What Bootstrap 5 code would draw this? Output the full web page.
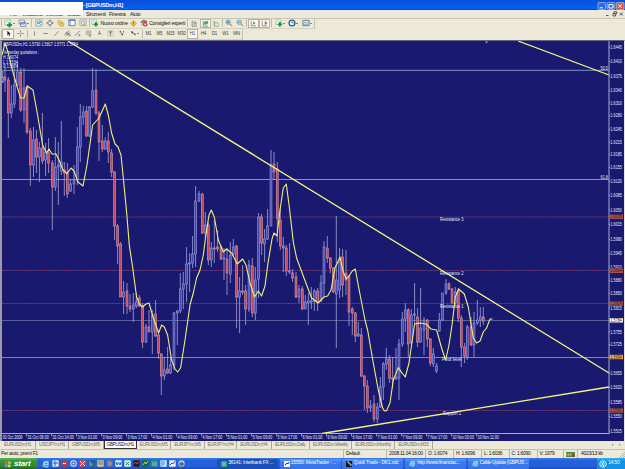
<!DOCTYPE html>
<html lang="it">
<head>
    <meta charset="UTF-8">
    <meta name="viewport" content="width=device-width, initial-scale=1.0">
    <title>[GBPUSDm,H1]</title>
    <link href="https://cdn.jsdelivr.net/npm/bootstrap@5.3.0/dist/css/bootstrap.min.css" rel="stylesheet">
    <style>
        body {
            width: 625px;
            height: 469px;
            font-family: "Liberation Sans", Arial, sans-serif;
            font-size: 5px;
            line-height: 1;
            letter-spacing: -0.2px;
            color: #111;
            background: #ece9d8;
        }
        svg { display: block; flex: none; }

        /* Title and menu */
        .title-bar {
            height: 10px;
            padding: 1px 0 0 83px;
            background: linear-gradient(#0a50d8, #0357e6 50%, #0560f8 85%, #0340b0);
            color: #fff;
            font-size: 5.6px;
            letter-spacing: -0.35px;
        }
        .menu-bar { height: 8.5px; padding: 1px 0 0 10px; border-bottom: .5px solid #c9c6b6; }
        .menu-bar .item { height: 8px; white-space: nowrap; }
        .menu-grid { display: grid; grid-template-columns: 12px 24px 21px 19px 23px 21px 14px; }
        .blank-patch { left: 0; top: 2px; width: 83px; height: 13.3px; background: #fff; z-index: 2; }

        /* Toolbars */
        .tools { height: 10.5px; display: grid; align-items: center; width: max-content; border-right: 1px solid #c4c1b1; border-bottom: .5px solid #d5d2c2; }
        .tools-main { grid-template-columns: 2px 14px 14px 3px 11px 11px 11px 11px 11px 3px 37px 11px 47px 3px 11px 11px 10px 2px 11px 11px 3px 11px 11px 3px 13px 13px 15px; }
        .tools-draw { grid-template-columns: 2px 12px 12px 3px 11px 11px 11px 10px 11px 11px 11px 11px 11px 14px 2px 11px 11px 11px 11px 11px 11px 11px 11px 11px; color: #444; font-size: 4.5px; }
        .tools > * { height: 9.5px; display: flex; align-items: center; justify-content: center; white-space: nowrap; }
        .tools .period { padding-top: 1px; }
        .tools .sep { width: 1px; height: 8px; background: #bdbaaa; justify-self: center; }
        .pressed { background: #f8f7f1; border: .5px solid #b5b2a4; }
        .pick::after { content: ""; border: 1.1px solid transparent; border-top: 1.5px solid #222; margin-top: 1px; }

        /* Chart */
        .chart-pane { height: 401.5px; background: #191970; border-left: 2px solid #9a99a4; border-top: 1.5px solid #66667a; border-right: 1px solid #e8e6dc; }
        .chart-pane text { font-family: "Liberation Sans", Arial, sans-serif; letter-spacing: 0; }

        /* Sheets */
        .sheets { height: 8.5px; display: grid; grid-template-rows: 8px; grid-template-columns: 36px 33px 34.5px 33.5px 34px 34px 32px 34.5px 38.5px 42px 43px 38px 1fr; color: #716f66; font-size: 4.7px; letter-spacing: -.38px; border-bottom: .5px solid #c4c1b4; }
        .sheets > * { display: flex; align-items: center; justify-content: center; white-space: nowrap; border-right: .5px solid #aaa798; padding-top: 1.5px; }
        .sheets .current { background: #fff; color: #111; border: 1px solid #333; border-top: 0; }
        .sheets > :last-child { border: 0; justify-content: flex-end; padding-right: 5px; gap: 6px; }

        /* Status */
        .status { height: 8.5px; display: grid; grid-template-columns: 343px 43px 39px 28px 28px 27.5px 28px 26.5px 14px 1fr; font-size: 4.9px; letter-spacing: -.25px; align-items: center; }
        .status > * { white-space: nowrap; padding: 1.5px 0 0 2px; height: 8px; display: flex; align-items: center; border-left: .5px solid #b9b6a6; }
        .status > :first-child { border: 0; padding-left: 1px; }

        /* Taskbar */
        .taskbar { height: 11px; background: linear-gradient(#3a7cea, #2560dc 25%, #2560dc 80%, #1b48ae); color: #fff; font-size: 4.9px; letter-spacing: -.2px; }
        .start-btn { width: 38px; background: linear-gradient(#5cb35a, #389238 30%, #308530 80%, #226022); border-radius: 0 4px 4px 0; font-size: 8px; font-weight: bold; font-style: italic; letter-spacing: -.2px; padding-left: 4px; }
        .quick { width: 179px; padding-left: 3.5px; }
        .quick > * { width: 9px; display: flex; justify-content: center; }
        .task { width: 61px; height: 10px; margin-right: 1.7px; padding: .5px 0 0 4px; background: linear-gradient(#5d9bfa, #3b7df0 30%, #3674e8); border-radius: 1px; white-space: nowrap; }
        .task.down { background: #1c4fb8; }
        .task.tight { letter-spacing: -.32px; }
        .tray { width: 28px; background: linear-gradient(#2fb3f4, #1292e6 30%, #1490e4); padding-left: 2px; }
    </style>
</head>
<body class="d-flex flex-column overflow-hidden position-relative m-0">

<!-- Icon set -->
<svg width="0" height="0" class="position-absolute">
    <symbol id="i-new" viewBox="0 0 18 18"><path d="M2 2h11v10H2z" fill="#fff" stroke="#6a8a70"/><path d="M4 8l3-3 3 2" stroke="#4a7ab0" fill="none"/><path d="M11 7v10M6 12h10" stroke="#18982a" stroke-width="4"/></symbol>
    <symbol id="i-prof" viewBox="0 0 18 18"><path d="M2 2h11v8H2zM5 7h11v8H5z" fill="#dce8f4" stroke="#64809c" stroke-width="1.4"/><path d="M5 8h11" stroke="#5c88bc" stroke-width="2"/></symbol>
    <symbol id="i-market" viewBox="0 0 18 18"><path d="M2 2h14v14H2z" fill="#e8f2fa" stroke="#6c98bd" stroke-width="1.5"/><path d="M4 5l9 8M4 12l5-5" stroke="#52729a" stroke-width="2"/><path d="M10 3l5 4-5 3z" fill="#48a048"/></symbol>
    <symbol id="i-data" viewBox="0 0 18 18"><circle cx="9" cy="9" r="5" fill="#eee" stroke="#777" stroke-width="1.6"/><path d="M9 1v5M9 12v5M1 9h5M12 9h5" stroke="#555" stroke-width="2"/></symbol>
    <symbol id="i-folder" viewBox="0 0 18 18"><path d="M2 4h5l1 2h4v6H2z" fill="#f5dc68" stroke="#b58d20"/><path d="M7 9h8v7H7z" fill="#f5d050" stroke="#a88018"/><path d="M3 1l2 3 3 1-3 2" fill="#e0a820"/></symbol>
    <symbol id="i-panel" viewBox="0 0 18 18"><path d="M2 2h14v13H2z" fill="#fff" stroke="#4a78b0" stroke-width="2"/><path d="M2 3h14" stroke="#3c6cb0" stroke-width="2"/><path d="M5 3v12" stroke="#6890c0" stroke-width="2"/></symbol>
    <symbol id="i-test" viewBox="0 0 18 18"><path d="M2 2h14v13H2z" fill="#e4eef8" stroke="#6a98c0" stroke-width="1.5"/><circle cx="9" cy="9" r="3.5" fill="#fff" stroke="#d09820" stroke-width="2"/><path d="M12 12l4 4" stroke="#d09820" stroke-width="2"/></symbol>
    <symbol id="i-warn" viewBox="0 0 18 18"><path d="M9 1l8 8-8 8-8-8z" fill="#f4c73a" stroke="#b88518" stroke-width="1.4"/><path d="M9 5v5M9 12v2" stroke="#7c5500" stroke-width="2"/></symbol>
    <symbol id="i-expert" viewBox="0 0 18 18"><path d="M1 7l7-5 8 3-6 5z" fill="#4b86be" stroke="#365f88"/><path d="M3 8h9v7H3z" fill="#e4a94c"/><circle cx="12" cy="12" r="5" fill="#d42a20"/><path d="M10 10h4v4h-4z" fill="#fff"/></symbol>
    <symbol id="i-bars" viewBox="0 0 18 18"><path d="M3 2v14h13" stroke="#555" stroke-width="1.5" fill="none"/><path d="M8 4v9M6 6h2M12 3v9M12 10h3" stroke="#2c7a50" stroke-width="1.6"/></symbol>
    <symbol id="i-candle" viewBox="0 0 18 18"><path d="M3 2v14h13" stroke="#555" stroke-width="1.5" fill="none"/><path d="M8 2v12M13 2v11" stroke="#156c35"/><path d="M6 5h4v6H6zM11 4h4v5h-4z" fill="#63bc74" stroke="#156c35"/></symbol>
    <symbol id="i-line" viewBox="0 0 18 18"><path d="M3 2v14h13" stroke="#666" stroke-width="1.5" fill="none"/><path d="M3 12c3-9 7-6 13 0" stroke="#45a060" stroke-width="2" fill="none"/></symbol>
    <symbol id="i-zoomin" viewBox="0 0 18 18"><path d="M10 10l6 6" stroke="#d1a436" stroke-width="3"/><circle cx="7" cy="7" r="5" fill="#cfe6f8" stroke="#5c90b8" stroke-width="1.8"/><path d="M4 7h6M7 4v6" stroke="#28567c" stroke-width="1.6"/></symbol>
    <symbol id="i-zoomout" viewBox="0 0 18 18"><path d="M10 10l6 6" stroke="#d1a436" stroke-width="3"/><circle cx="7" cy="7" r="5" fill="#cfe6f8" stroke="#5c90b8" stroke-width="1.8"/><path d="M4 7h6" stroke="#28567c" stroke-width="1.6"/></symbol>
    <symbol id="i-scroll" viewBox="0 0 18 18"><path d="M3 2v13h13" stroke="#555" stroke-width="1.5" fill="none"/><path d="M8 4l6 4-6 4z" fill="#2f9a48"/></symbol>
    <symbol id="i-shift" viewBox="0 0 18 18"><path d="M3 2v13h13M11 2v11" stroke="#555" stroke-width="1.5" fill="none"/><path d="M17 8h-6M14 5l-4 3 4 3" fill="#b33" stroke="#954050"/></symbol>
    <symbol id="i-clock" viewBox="0 0 18 18"><circle cx="9" cy="9" r="6.5" fill="#fff" stroke="#23609a" stroke-width="3"/><path d="M9 5v4h4" stroke="#333" stroke-width="1.5" fill="none"/></symbol>
    <symbol id="i-tpl" viewBox="0 0 18 18"><path d="M2 3h14v12H2z" fill="#dce6ee" stroke="#567a98" stroke-width="2"/><path d="M3 10l4-3 3 3 5-4M3 13h11" stroke="#6d8798" stroke-width="1.5" fill="none"/></symbol>
    <symbol id="i-cursor" viewBox="0 0 18 18"><path d="M6 2v12l3-3 2 5 2-1-2-5h4z" fill="#222"/></symbol>
    <symbol id="i-cross" viewBox="0 0 18 18"><path d="M9 1v6M9 11v6M1 9h6M11 9h6" stroke="#555" stroke-width="1.6"/></symbol>
    <symbol id="i-vl" viewBox="0 0 18 18"><path d="M9 3v12" stroke="#666" stroke-width="1.8"/></symbol>
    <symbol id="i-hl" viewBox="0 0 18 18"><path d="M3 9h12" stroke="#666" stroke-width="1.8"/></symbol>
    <symbol id="i-tl" viewBox="0 0 18 18"><path d="M3 15L15 3" stroke="#666" stroke-width="1.8"/></symbol>
    <symbol id="i-chan" viewBox="0 0 18 18"><path d="M1 12L13 2M4 16L16 6M4 8l9 5M7 5l6 7" stroke="#555" stroke-width="1.6"/><path d="M12 11h4v5h-4" stroke="#444" fill="none"/></symbol>
    <symbol id="i-reg" viewBox="0 0 18 18"><path d="M2 15L15 2M11 12h5M11 15h5" stroke="#666" stroke-width="1.8"/></symbol>
    <symbol id="i-fib" viewBox="0 0 18 18"><path d="M2 3h14M2 7h14M2 11h14" stroke="#777" stroke-width="1.6"/><path d="M11 13h5M11 16h5M11 12v5" stroke="#444"/></symbol>
    <symbol id="i-lbl" viewBox="0 0 18 18"><path d="M2 2h14v14H2z" fill="none" stroke="#777" stroke-dasharray="2 1"/><path d="M5 5h8M9 5v9" stroke="#444" stroke-width="1.8"/></symbol>
    <symbol id="i-shape" viewBox="0 0 18 18"><path d="M3 5l4-3 2 5zM8 8l6 2-4 5zM13 2l3 3-3 2z" fill="#444"/></symbol>
    <symbol id="i-arrows" viewBox="0 0 18 18"><path d="M3 4l5 1-2 4zM8 8l5 5 2-3" fill="#333" stroke="#333"/></symbol>
    <symbol id="i-ie" viewBox="0 0 18 18"><path d="M15 10H5a4.5 4.5 0 0 0 9 2M4 9a5 5 0 0 1 10 0" fill="none" stroke="#8fe0fc" stroke-width="3"/><path d="M2 16C-1 10 10 1 16 3" fill="none" stroke="#f2d25c" stroke-width="1.5"/></symbol>
    <symbol id="i-win" viewBox="0 0 18 18"><path d="M2 4l6-2v6l-6 1z" fill="#f06030"/><path d="M9 3l7 1-1 6-6-1z" fill="#90d050"/><path d="M2 10l6-1-1 6-6 1z" fill="#58a0f0"/><path d="M9 10l6 1-1 6-6-2z" fill="#fcd040"/></symbol>
</svg>

<!-- Title bar -->
<div class="title-bar d-flex align-items-center flex-shrink-0">
    <b>- [GBPUSDm,H1]</b>
    <svg class="ms-auto" width="28" height="8" viewBox="0 0 28 8">
        <g stroke="#d5e2fa" stroke-width=".6">
            <rect x="1" y=".4" width="7.6" height="7.2" rx="1" fill="#3467dd"/>
            <rect x="10.2" y=".4" width="7.6" height="7.2" rx="1" fill="#3467dd"/>
            <rect x="19.4" y=".4" width="7.6" height="7.2" rx="1" fill="#d9512e"/>
        </g>
        <path d="M2.8 5.8h3M12 2.5h4v3.5h-4zM21.3 2.2l3.7 3.7M25 2.2l-3.7 3.7" stroke="#fff" stroke-width="1" fill="none"/>
    </svg>
</div>

<!-- Menu -->
<div class="menu-bar d-flex align-items-center flex-shrink-0">
    <div class="menu-grid">
        <span class="item d-flex align-items-center">File</span>
        <span class="item d-flex align-items-center">Visualizza</span>
        <span class="item d-flex align-items-center">Inserisci</span>
        <span class="item d-flex align-items-center">Grafici</span>
        <span class="item d-flex align-items-center">Strumenti</span>
        <span class="item d-flex align-items-center">Finestra</span>
        <span class="item d-flex align-items-center">Aiuto</span>
    </div>
    <svg class="ms-auto" width="20" height="6" viewBox="0 0 20 6"><path d="M1 4.5h2.500M8 2.500h2.500V5H8zM9 2V.8h2.700V3.500M14.800 1.500l3 3M17.800 1.500l-3 3" fill="none" stroke="#333" stroke-width=".8"/></svg>
</div>
<div class="blank-patch position-absolute"></div>

<!-- Main toolbar -->
<div class="tools tools-main flex-shrink-0">
    <i class="sep"></i>
    <span class="pick"><svg width="9" height="9"><use href="#i-new"/></svg></span>
    <span class="pick"><svg width="9" height="9"><use href="#i-prof"/></svg></span>
    <i class="sep"></i>
    <span><svg width="8" height="8"><use href="#i-market"/></svg></span>
    <span><svg width="8" height="8"><use href="#i-data"/></svg></span>
    <span><svg width="8" height="8"><use href="#i-folder"/></svg></span>
    <span><svg width="8" height="8"><use href="#i-panel"/></svg></span>
    <span><svg width="8" height="8"><use href="#i-test"/></svg></span>
    <i class="sep"></i>
    <span><svg width="8" height="8"><use href="#i-new"/></svg>&nbsp;<span class="period">Nuovo ordine</span></span>
    <span><svg width="7" height="7"><use href="#i-warn"/></svg></span>
    <span><svg width="8" height="8"><use href="#i-expert"/></svg>&nbsp;<span class="period">Consiglieri esperti</span></span>
    <i class="sep"></i>
    <span><svg width="7" height="7"><use href="#i-bars"/></svg></span>
    <span class="pressed"><svg width="7" height="7"><use href="#i-candle"/></svg></span>
    <span><svg width="7" height="7"><use href="#i-line"/></svg></span>
    <i class="sep"></i>
    <span><svg width="8" height="8"><use href="#i-zoomin"/></svg></span>
    <span><svg width="8" height="8"><use href="#i-zoomout"/></svg></span>
    <i class="sep"></i>
    <span class="pressed"><svg width="7" height="7"><use href="#i-scroll"/></svg></span>
    <span class="pressed"><svg width="7" height="7"><use href="#i-shift"/></svg></span>
    <i class="sep"></i>
    <span class="pick"><svg width="8" height="8"><use href="#i-new"/></svg></span>
    <span class="pick"><svg width="8" height="8"><use href="#i-clock"/></svg></span>
    <span class="pick"><svg width="8" height="8"><use href="#i-tpl"/></svg></span>
</div>

<!-- Drawing tools and periods -->
<div class="tools tools-draw flex-shrink-0">
    <i class="sep"></i>
    <span class="pressed"><svg width="7" height="7"><use href="#i-cursor"/></svg></span>
    <span><svg width="7" height="7"><use href="#i-cross"/></svg></span>
    <i class="sep"></i>
    <span><svg width="7" height="7"><use href="#i-vl"/></svg></span>
    <span><svg width="7" height="7"><use href="#i-hl"/></svg></span>
    <span><svg width="7" height="7"><use href="#i-tl"/></svg></span>
    <span><svg width="7" height="7"><use href="#i-chan"/></svg></span>
    <span><svg width="7" height="7"><use href="#i-reg"/></svg></span>
    <span><svg width="7" height="7"><use href="#i-fib"/></svg></span>
    <span class="period">A</span>
    <span><svg width="7" height="7"><use href="#i-lbl"/></svg></span>
    <span><svg width="7" height="7"><use href="#i-shape"/></svg></span>
    <span class="pick"><svg width="7" height="7"><use href="#i-arrows"/></svg></span>
    <i class="sep"></i>
    <span class="period">M1</span>
    <span class="period">M5</span>
    <span class="period">M15</span>
    <span class="period">M30</span>
    <span class="period pressed">H1</span>
    <span class="period">H4</span>
    <span class="period">D1</span>
    <span class="period">W1</span>
    <span class="period">MN</span>
</div>

<!-- Chart, drawn by the script below -->
<div class="chart-pane flex-shrink-0">
    <svg id="chart" width="622" height="400" viewBox="2 41 622 400"></svg>
</div>

<!-- Open charts -->
<div class="sheets flex-shrink-0">
    <span>EURUSDm,H1</span>
    <span>USDJPYm,H1</span>
    <span>GBPUSDm,M5</span>
    <span class="current">GBPUSDm,H1</span>
    <span>EURUSDm,M5</span>
    <span>EURJPYm,M5</span>
    <span>EURJPYm,H4</span>
    <span>EURUSDm,H4</span>
    <span>EURUSDm,Daily</span>
    <span>EURUSDm,Weekly</span>
    <span>EURUSDm,Monthly</span>
    <span>EURUSDm,M15</span>
    <span><b>‹</b><b>›</b></span>
</div>

<!-- Status bar -->
<div class="status flex-shrink-0">
    <span>Per aiuto, premi F1</span>
    <span>Default</span>
    <span>2008.11.04 16:00</span>
    <span>O: 1.6074</span>
    <span>H: 1.6096</span>
    <span>L: 1.6036</span>
    <span>C: 1.6090</span>
    <span>V: 1979</span>
    <span><svg width="9" height="5" viewBox="0 0 9 5"><path d="M0 0h9v5H0z" fill="#5a7a3a"/><path d="M.8 1v3M2.8 1v3M4.8 1v3" stroke="#b8c860"/><path d="M6 3h3v2H6z" fill="#a04030"/></svg></span>
    <span>&nbsp;4023/13 kb<svg class="ms-auto" width="7" height="7" viewBox="0 0 7 7"><path d="M1 7l6-6M3 7l4-4M5 7l2-2" stroke="#aaa798" stroke-width=".7"/></svg></span>
</div>

<!-- Taskbar -->
<div class="taskbar d-flex align-items-stretch flex-shrink-0">
    <div class="start-btn d-flex align-items-center"><svg width="8" height="8"><use href="#i-win"/></svg>&nbsp;start</div>
    <div class="quick d-flex align-items-center" id="quick"></div>
    <div class="task down d-flex align-items-center align-self-center"><svg width="6" height="6" viewBox="0 0 6 6"><path d="M0 0h6v6H0z" fill="#2f9c6c"/><path d="M1 2h4M1 4h4" stroke="#9fe0b8"/></svg>&nbsp;36141: Interbank FX ...</div>
    <div class="task d-flex align-items-center align-self-center"><svg width="6" height="6" viewBox="0 0 6 6"><path d="M0 0h6v6H0z" fill="#f4f4f4"/><path d="M1 4l2-2 1 1 1-2" stroke="#345" fill="none"/></svg>&nbsp;15550: MetaTrader - ...</div>
    <div class="task d-flex align-items-center align-self-center"><svg width="6" height="6" viewBox="0 0 6 6"><path d="M0 0h6v6H0z" fill="#10151c"/><path d="M1 1h2v2h2v2" stroke="#ccc" fill="none"/></svg>&nbsp;Quick Trade - DK1.xdc</div>
    <div class="task d-flex align-items-center align-self-center"><svg width="7" height="7"><use href="#i-ie"/></svg>&nbsp;http://www.financiac...</div>
    <div class="task tight d-flex align-items-center align-self-center"><svg width="7" height="7"><use href="#i-ie"/></svg>&nbsp;Cable Update (GBPUS ...</div>
    <div class="tray d-flex align-items-center ms-auto"><svg width="8" height="8" viewBox="0 0 8 8"><circle cx="4" cy="4" r="3.3" fill="#48b4f4" stroke="#d8f0ff" stroke-width=".8"/><path d="M5 2L3 4l2 2" stroke="#fff" fill="none"/></svg>&nbsp;14.50</div>
</div>

<script src="https://cdn.jsdelivr.net/npm/bootstrap@5.3.0/dist/js/bootstrap.bundle.min.js"></script>
<script>
    // x, high, body top, body bottom, low, direction (u = up, d = down)
    const candles = `2.7 71 77 82 83 u;5 65 77 80 92 d;8.3 77 80 113 138 d;11.3 85 104 113 118 u;14.3 65 85 104 108 u;17.3 62 72 85 86 u;20.7 68 72 110 112 d;24 68 88 110 123 u;27 85 87 132 134 d
30.3 128 131 165 186 d;33.5 127 140 165 177 u;36.4 130 139 157 173 d;39.4 142 148 157 182 u;42.4 113 148 161 164 d;45.6 143 152 160 176 u;48.6 138 153 163 173 d;52.3 160 163 187 230 d;55.3 137 167 187 191 u
58.3 142 165 167 205 u;61.3 121 162 171 175 u;64.3 162 170 173 196 d;67.3 163 173 194 198 d;70.6 180 184 191 192 u;74 165 180 184 194 u;77.3 127 147 180 185 u;80.3 104 117 147 162 u;83.3 106 112 117 125 u
86.6 106 111 136 137 d;89.6 106 107 136 137 u;92.6 68 91 107 108 u;96 69 90 113 115 d;99 111 113 142 161 d;102.3 125 141 149 152 d;105.3 137 141 149 150 u;108.3 132 141 152 163 d;111.6 149 153 172 177 d
114.6 171 172 226 240 d;117.6 224 226 246 264 d;120.6 242 244 297 297 d;123.6 281 292 297 314 u;127 283 291 306 314 d;130 294 306 309 312 d;133.3 293 305 309 322 u;136.3 293 302 306 308 u;139.3 295 298 306 307 d
142.6 303 306 342 348 d;146 324 327 342 343 u;149 310 327 332 332 d;152.3 310 315 332 354 u;155.6 300 314 336 337 d;158.6 332 335 353 359 d;161.3 353 354 376 395 d;164.3 357 370 376 380 u;167.6 347 369 373 374 d
170.6 357 365 373 374 u;174 312 313 365 370 u;177.3 310 311 313 345 u;180.3 273 289 311 313 u;183.3 272 284 289 309 u;186.6 247 264 284 302 u;189.6 253 263 264 292 u;192.6 236 254 263 268 u;195.6 186 201 254 267 u
199 191 194 201 202 u;202.3 193 194 233 234 d;205.3 212 225 233 238 u;208.3 222 225 260 265 d;211.3 242 248 260 267 u;214.3 220 248 249 263 d;217.6 230 247 249 252 d;221 245 247 259 260 d;224 248 258 259 280 u
227 248 259 273 295 d;230.3 242 255 274 283 u;233.3 239 247 254 256 u;236.6 245 246 297 328 d;239.6 277 291 297 333 u;242.6 265 291 292 295 d;245.6 285 291 309 325 d;249 260 265 309 312 u;252.3 258 266 313 317 d
255.3 267 280 313 320 u;258.6 213 217 279 298 u;261.6 214 217 243 255 d;264.6 229 239 244 262 u;267.6 209 226 239 240 u;271 150 165 226 226 u;274 152 164 172 180 d;277.3 162 169 218 242 d;280.3 208 220 246 250 d
283.3 237 246 248 272 d;286.3 245 248 271 276 d;289.6 243 271 272 274 u;292.6 269 273 278 282 d;296 272 277 297 298 d;299 285 289 297 303 u;302.3 286 289 309 310 d;305.3 295 302 309 309 u;308.3 293 301 303 325 u
311.3 287 301 302 309 u;314.3 289 291 301 311 u;317.6 288 291 302 311 d;321 275 283 301 302 u;324 241 247 283 297 u;327.3 236 248 258 263 d;330.3 257 258 268 273 d;333.3 267 268 292 293 d;336.3 216 280 294 348 u
339.6 248 262 290 298 u;342.6 249 257 285 297 d;346 250 273 280 295 d;349 275 276 312 326 d;352.3 307 309 313 335 d;355.3 312 313 336 342 d;358.3 322 334 336 337 u;361.3 328 335 376 377 d;364.3 375 376 386 410 d
367.3 380 386 408 413 d;370.6 400 406 408 412 u;374 395 404 419 422 d;377.3 403 407 419 423 u;380.3 377 387 407 408 u;383.3 362 364 387 400 u;386.3 348 359 364 370 u;389.6 355 359 378 383 d;392.6 357 378 379 388 d
396 348 377 379 380 u;399 339 344 378 400 u;402.3 312 319 344 347 u;405.3 303 310 319 332 u;408.3 308 310 344 357 d;411.3 309 315 343 343 u;414.6 283 314 315 325 u;417.6 308 317 342 347 d;420.6 288 328 342 343 u
424 317 320 330 355 u;427.3 319 320 339 347 d;430.3 338 339 363 366 d;433.3 348 354 364 367 u;436.6 363 366 371 373 u;439.3 313 320 331 332 u;442.6 293 293 320 321 u;446 279 284 293 295 u;449 282 284 289 290 d
452 288 289 303 304 d;455.3 287 292 303 305 u;458.3 288 291 318 322 d;461.3 315 318 347 367 d;464.6 343 347 356 363 d;467.3 325 327 357 360 u;471 317 327 345 346 d;474 312 323 345 357 u;477.3 300 320 323 325 u
480.3 307 317 320 327 u;483.3 307 317 321 325 d`.split(/[;\n]/).map(row => row.trim().split(' ').map((v, i) => i < 5 ? Number(v) : v));

    const average = `2,55 5,43 8,52 11,65 16.6,85 20.6,98 24,98 27.3,86 33,90 37.6,115 42.6,145 46.6,153 49,149 52,154 56,154 59,160 63,170 67,173.6 71,168 74,171 78,182 83,186 87,165 92.6,125 99,118 105.3,104 108.3,115 111.6,133 115,144 118,147 121,155 124,185 126.6,212 129.3,245 132.6,267 136.6,297 139.5,304 142.6,307 146,304 149,303 153,317 158.6,333 161.6,325 164.3,327 167.6,335 171.6,360 175,369 177.6,372 180.6,368 185,340 190,305 193.3,293 196.6,278 200,270 203.3,255 206.6,230 209,215 211.3,210 214.3,217 218.3,240 223.3,252 226.6,249 231.6,253 237.3,264 242.6,259 246,265 250,283 254.6,297 258.3,291 261.6,296 265,286 268,263 272,239 274,233 277,236 280,210 283.3,188 286.3,184 289.3,207 293.3,242 296.6,258 304,278 311.6,298 318,303 324,297 327.6,296 331,290 335,268 340,257 343.3,272 346.3,279 349,276 352.3,271 355.3,269 358.6,287 365,320 367.6,330 373.3,363 378.3,390 382.6,408 384.5,411 386.6,410.6 390,403 393.3,380 398.3,367.6 401,371.6 405.3,377 409,363 412.3,340 414.6,324 420,323 426.6,324.3 431,329 436.6,330 441.6,348 445.6,360 449,345 452.3,323 455.3,297 458.6,289 464.3,294 468.3,307 473.3,338 476.6,343 480,341 483.3,332 486.6,328 490,319 492.6,319`;

    const prices = [[47.3, '1.6445'], [61.6, '1.6410'], [76, '1.6375'], [90.6, '1.6340'], [103, '1.6310'], [115.6, '1.6280'], [129.3, '1.6245'],
        [142.3, '1.6215'], [154.6, '1.6185'], [167.3, '1.6155'], [181.3, '1.6120'], [195.6, '1.6085'], [210, '1.6050'], [224.3, '1.6015'],
        [239.3, '1.5980'], [253.6, '1.5945'], [267, '1.5910'], [280.3, '1.5880'], [293.3, '1.5850'], [308, '1.5815'], [332, '1.5755'],
        [344.6, '1.5725'], [373.3, '1.5655'], [387.3, '1.5620'], [402, '1.5585'], [416.6, '1.5550'], [431, '1.5515']];

    const marks = [[216.7, '1.6036', '#a8544c', '#3a1818'], [270.8, '1.5904', '#a8544c', '#3a1818'], [303.5, '1.5824', '#a8544c', '#3a1818'],
        [320.3, '1.5784', '#fff', '#111'], [357, '1.5694', '#e8ad50', '#3a2408'], [410.5, '1.5563', '#a8544c', '#3a1818']];

    const dates = ['30 Oct 2008', '31 Oct 06:00', '31 Oct 14:00', '3 Nov 01:00', '3 Nov 09:00', '3 Nov 17:00', '4 Nov 01:00', '4 Nov 09:00', '4 Nov 17:00',
        '5 Nov 01:00', '5 Nov 09:00', '5 Nov 17:00', '6 Nov 01:00', '6 Nov 09:00', '6 Nov 17:00', '7 Nov 01:00', '7 Nov 09:00', '7 Nov 17:00', '10 Nov 03:00', '10 Nov 11:00'];

    const notes = [[3, 44, 75, 'GBPUSDm,H1  1.5790 1.5817 1.5771 1.5784'], [3, 52.5, 36, 'Yesterday quotations :'], [3, 57.3, 15, 'H 1.6074'], [3, 62, 15, 'L 1.5534'], [3, 66.8, 15, 'C 1.5874'],
        [440, 219.3, 23.5, 'Resistance 3'], [440, 273, 23.5, 'Resistance 2'], [440, 306.3, 23.5, 'Resistance 1'], [442, 359.8, 19.5, 'Pivot level'], [443, 413.3, 18, 'Support 1'],
        [600.5, 68.3, 7.5, '50.0'], [600.5, 177.3, 7.5, '61.8']];

    function label(x, y, width, text, color) {
        return `<text x="${x}" y="${y + 1.6}" font-size="4.6" fill="${color}" textLength="${width}" lengthAdjust="spacingAndGlyphs">${text}</text>`;
    }

    let out = '';

    // Levels
    [[70.3, '#86a4cc'], [179.5, '#86a4cc'], [320.5, '#5a66a4'], [357.5, '#a08ca8']].forEach(l => {
        out += `<path d="M2 ${l[0]}H609" stroke="${l[1]}" stroke-width=".9"/>`;
    });
    [217, 270.5, 303.5, 410.5].forEach(y => {
        out += `<path d="M2 ${y}H609" stroke="#8a4672" stroke-width=".8" stroke-dasharray="1.5 .7"/>`;
    });

    // Candles
    candles.forEach(([x, high, top, bottom, low, dir]) => {
        const up = dir === 'u';
        const height = Math.max(bottom - top, .8);
        out += `<path d="M${x} ${high}V${low}" stroke="${up ? '#a4a8dc' : '#b0a4cc'}" stroke-width=".8"/>`;
        out += `<rect x="${x - .95}" y="${top}" width="1.9" height="${height}" fill="${up ? '#4646a8' : '#c84450'}" stroke="${up ? '#9c9ee6' : '#d89ca6'}" stroke-width=".6"/>`;
    });

    // Moving average and trend lines
    out += `<polyline points="${average}" fill="none" stroke="#f0f078" stroke-width="1.1" stroke-linejoin="round"/>`;
    out += `<path d="M68 41L609 373M518 41L609 75M322 433.5L609 387" fill="none" stroke="#f6f67c" stroke-width="1.3"/>`;

    // Axes
    out += `<path d="M609 41V433.5M2 433.5H609.5" stroke="#b8bcd8" stroke-width=".9" fill="none"/><path d="M485 41.5h3l-1.5 2z" fill="#aab"/>`;
    prices.forEach(([y, text]) => {
        out += `<path d="M609 ${y}h1.2" stroke="#ccd" stroke-width=".7"/>` + label(610.5, y, 11.3, text, '#ececf6');
    });
    marks.forEach(([y, text, back, ink]) => {
        out += `<rect x="609.7" y="${y - 2.2}" width="13.3" height="4.4" fill="${back}"/>` + label(610.5, y, 11.3, text, ink);
    });
    dates.forEach((text, i) => {
        const x = 1.6 + i * 25;
        out += `<path d="M${x} 433.5v3" stroke="#ccd" stroke-width=".7"/>` + label(x + .8, 437, i === 1 || i === 2 || i > 17 ? 21.5 : 20, text, '#ececf6');
    });
    notes.forEach(([x, y, width, text]) => {
        out += label(x, y, width, text, '#ececf6');
    });
    document.getElementById('chart').innerHTML = out;

    // Quick launch icons: background, ink, shape
    const quick = [['#fff0', '', ''], ['#cfe4f4', '#2c68a8', 'M1 3h5M3 1v5'], ['#d03828', '#fff', 'M2 3.5h3'], ['#e8eef8', '#2848a0', 'M2 2h3v3h-3z'], ['#c84848', '#e8e0f0', 'M1 1l5 5M6 1L1 6'],
        ['#28588c', '#70d080', 'M2 1v5M4 3v3'], ['#e8d060', '#3878b0', 'M1 4h5M1 2h5'], ['#6870a0', '#e0a870', 'M3 1v5M5 2v3'], ['#e8f0fc', '#2858b8', 'M1 2l1 3 1.5-3L5 5l1-3'], ['#d8f0dc', '#208040', 'M2 2l3 3M5 2L2 5'],
        ['#301c20', '#d04030', 'M1 4l2-2 1 2 2-2'], ['#186838', '#b8d840', 'M1 5l2-3 1 2 2-3'], ['#309080', '#70d0b0', 'M1 3h5M1 5h5'], ['#d0e8fc', '#3088d0', 'M2 1v5M4 1v4'], ['#e8f0f4', '#406080', 'M1 5l2-2 1 1 2-3'], ['#b8c8d8', '#303848', 'M2 3h3v2h-3z']];
    document.getElementById('quick').innerHTML = quick.map(([back, ink, shape], i) => i === 0
        ? '<span><svg width="8" height="8"><use href="#i-ie"/></svg></span>'
        : `<span><svg width="7" height="7" viewBox="0 0 7 7"><rect x=".3" y=".3" width="6.4" height="6.4" rx="${[2, 3, 15].includes(i) ? 3.2 : .6}" fill="${back}"/><path d="${shape}" stroke="${ink}" fill="none"/></svg></span>`).join('');
</script>
</body>
</html>
